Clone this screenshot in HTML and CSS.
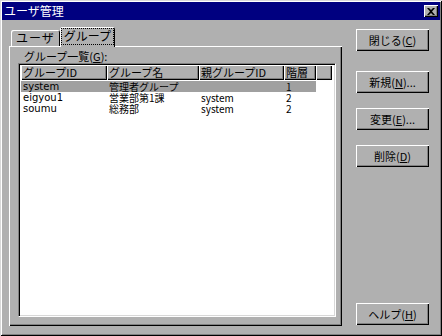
FILE: index.html
```html
<!DOCTYPE html>
<html lang="ja">
  <head>
    <meta charset="UTF-8" />
    <title>ユーザ管理</title>
    <link rel="stylesheet" href="styles.css">
  </head>
  <body>
    <div class="window">
      <div class="titlebar">
        <span class="title">ユーザ管理</span>
        <span class="close">
          <svg width="8" height="7" viewBox="0 0 8 7"><path d="M0 0h2l2 2 2-2h2L5 3.5 8 7H6L4 5 2 7H0l3-3.5z" fill="#000"/></svg>
        </span>
      </div>
      <div class="main">
        <div class="left">
          <ul class="tabs">
            <li>ユーザ</li>
            <li class="on"><span>グループ</span></li>
          </ul>
          <div class="panel">
            <div class="label">グループ一覧(<u>G</u>):</div>
            <div class="listbox">
              <div class="row head">
                <div class="c1">グループID</div>
                <div class="c2">グループ名</div>
                <div class="c3">親グループID</div>
                <div class="c4">階層</div>
                <div class="c5"></div>
              </div>
              <div class="row sel">
                <div class="c1">system</div>
                <div class="c2">管理者グループ</div>
                <div class="c3"></div>
                <div class="c4">1</div>
              </div>
              <div class="row">
                <div class="c1">eigyou1</div>
                <div class="c2">営業部第1課</div>
                <div class="c3">system</div>
                <div class="c4">2</div>
              </div>
              <div class="row">
                <div class="c1">soumu</div>
                <div class="c2">総務部</div>
                <div class="c3">system</div>
                <div class="c4">2</div>
              </div>
            </div>
          </div>
        </div>
        <div class="right">
          <button class="btn b1">閉じる(<u>C</u>)</button>
          <button class="btn b2">新規(<u>N</u>)...</button>
          <button class="btn b3">変更(<u>E</u>)...</button>
          <button class="btn b4">削除(<u>D</u>)</button>
          <button class="btn help">ヘルプ(<u>H</u>)</button>
        </div>
      </div>
    </div>
  </body>
</html>
```

FILE: styles.css
```css
* {
  margin: 0;
  padding: 0;
  box-sizing: border-box;
}
ul {
  list-style: none;
}
body {
  background: #b0b0b0;
  font-family: "Noto Sans CJK JP", "DejaVu Sans", sans-serif;
  font-size: 11px;
  color: #000;
}
.window {
  width: 442px;
  height: 336px;
  padding: 2px;
  background: #b0b0b0;
  box-shadow: inset 1px 1px 0 #d8d8d8, inset -1px -1px 0 #000, inset 2px 2px 0 #fff, inset -2px -2px 0 #808080;
  display: flex;
  flex-direction: column;
}
.titlebar {
  height: 18px;
  background: #000080;
  color: #fff;
  display: flex;
  align-items: center;
  justify-content: space-between;
  padding: 0 2px 0 2px;
}
.title {
  font-size: 12px;
  line-height: 14px;
}
.close {
  width: 14px;
  height: 12px;
  background: #b0b0b0;
  box-shadow: inset 1px 1px 0 #fff, inset -1px -1px 0 #000, inset -2px -2px 0 #808080;
  display: flex;
  align-items: center;
  justify-content: center;
}
.main {
  flex: 1;
  display: flex;
  padding: 7px 0 0 7px;
}
.left {
  width: 333px;
}
.tabs {
  display: flex;
  align-items: flex-end;
  height: 19px;
  padding-left: 2px;
}
.tabs li {
  height: 16px;
  padding: 0 5px;
  line-height: 16px;
  font-size: 12px;
  letter-spacing: 1px;
  box-shadow: inset 1px 1px 0 #fff, inset -1px 0 0 #000;
  border-radius: 2px 2px 0 0;
}
.tabs li.on {
  height: 20px;
  margin-bottom: -1px;
  padding: 2px 2px 0;
  letter-spacing: 0;
  background: #b0b0b0;
  position: relative;
  z-index: 1;
}
.tabs li.on span {
  display: block;
  height: 15px;
  line-height: 14px;
  padding: 0 2px;
  outline: 1px dotted #000;
}
.panel {
  height: 280px;
  padding: 3px 6px 8px 9px;
  box-shadow: inset 1px 1px 0 #fff, inset -1px -1px 0 #000, inset -2px -2px 0 #808080;
}
.label {
  padding-left: 6px;
  height: 14px;
  line-height: 14px;
}
.listbox {
  height: 254px;
  background: #fff;
  border: 1px solid;
  border-color: #808080 #fff #fff #808080;
  box-shadow: inset 1px 1px 0 #000, inset -1px -1px 0 #d8d8d8;
  padding: 1px 3px 0 2px;
}
.row {
  display: flex;
  height: 11px;
  width: 295px;
}
.row div {
  padding-left: 2px;
  white-space: nowrap;
}
.c1 { width: 86px; }
.c2 { width: 92px; }
.c3 { width: 85px; }
.c4 { width: 32px; }
.c5 { flex: 1; }
.row.head {
  width: auto;
  height: 15px;
  margin-bottom: 1px;
}
.row.head div {
  line-height: 14px;
  background: #b0b0b0;
  box-shadow: inset 1px 1px 0 #fff, inset -1px -1px 0 #000, inset -2px -2px 0 #808080;
  font-size: 11px;
}
.row.sel {
  background: #a0a0a0;
}
.row:not(.head) div {
  font-size: 10px;
  line-height: 11px;
}
.row .c1 {
  font-family: "DejaVu Sans", sans-serif;
  font-size: 9px;
}
.row.head .c1 {
  font-family: inherit;
}
.right {
  width: 73px;
  margin-left: 14px;
  display: flex;
  flex-direction: column;
  padding-bottom: 9px;
}
.btn {
  height: 22px;
  background: #b0b0b0;
  border: none;
  font-family: inherit;
  font-size: 11px;
  box-shadow: inset 1px 1px 0 #fff, inset -1px -1px 0 #000, inset -2px -2px 0 #808080;
}
.b1 { margin-top: 2px; }
.b2 { margin-top: 20px; }
.b3 { margin-top: 15px; }
.b4 { margin-top: 15px; }
.help { margin-top: auto; }
```
